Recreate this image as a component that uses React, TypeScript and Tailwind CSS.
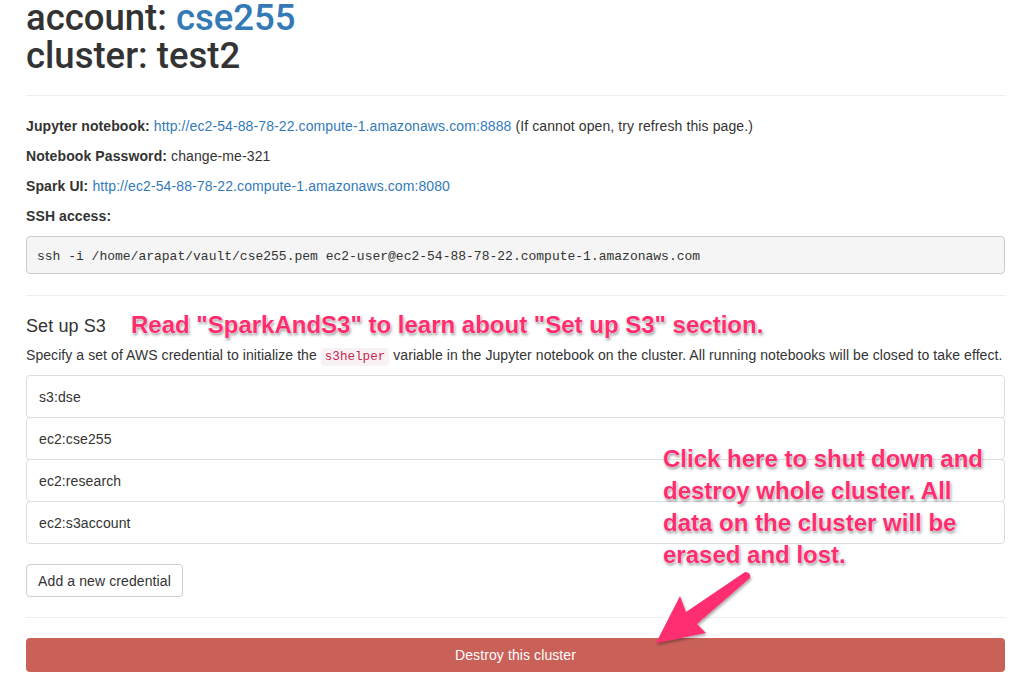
import React from "react";

const creds = ["s3:dse", "ec2:cse255", "ec2:research", "ec2:s3account"];

const annot =
  "font-bold text-[24px] tracking-normal text-[#ff2d6f] [font-family:'Liberation_Sans',Arial,sans-serif] [text-shadow:0_0_1px_#fff,0_0_2px_#fff,1px_2px_3px_rgba(0,0,0,0.45)]";

export default function App() {
  return (
    <div className="relative min-h-[685px] bg-white pl-[26px] pr-[18px] text-[14px] leading-[20px] tracking-[0.1px] text-[#333] [font-family:'Liberation_Sans',Arial,sans-serif]">
      <h1 className="-mt-px text-[36.5px] leading-[38px] font-medium tracking-normal text-[#333] [font-family:Roboto,'Liberation_Sans',sans-serif]">
        account: <a className="text-[#337ab7]">cse255</a>
        <br />
        cluster: test2
      </h1>
      <hr className="mt-5 mb-5 border-0 border-t border-[#eee]" />
      <p className="mb-[10px]">
        <b>Jupyter notebook:</b>{" "}
        <a className="text-[#337ab7]">http://ec2-54-88-78-22.compute-1.amazonaws.com:8888</a>{" "}
        (If cannot open, try refresh this page.)
      </p>
      <p className="mb-[10px]">
        <b>Notebook Password:</b> change-me-321
      </p>
      <p className="mb-[10px]">
        <b>Spark UI:</b>{" "}
        <a className="text-[#337ab7]">http://ec2-54-88-78-22.compute-1.amazonaws.com:8080</a>
      </p>
      <p className="mb-[10px]">
        <b>SSH access:</b>
      </p>
      <pre className="h-[38px] rounded border border-[#ccc] bg-[#f5f5f5] px-[10px] text-[13px] leading-[39px] tracking-normal text-[#333] [font-family:'Liberation_Mono','DejaVu_Sans_Mono',monospace]">
        ssh -i /home/arapat/vault/cse255.pem ec2-user@ec2-54-88-78-22.compute-1.amazonaws.com
      </pre>
      <hr className="mt-[21px] mb-5 border-0 border-t border-[#eee]" />
      <h4 className="text-[18px] leading-[20px] font-normal">Set up S3</h4>
      <p className="mt-[9px] mb-[8px] whitespace-nowrap text-[14px] leading-[20px] tracking-[0.07px]">
        Specify a set of AWS credential to initialize the{" "}
        <code className="rounded bg-[#f9f2f4] px-[4px] py-[2px] text-[12.6px] tracking-normal text-[#c7254e] [font-family:'Liberation_Mono','DejaVu_Sans_Mono',monospace]">
          s3helper
        </code>{" "}
        variable in the Jupyter notebook on the cluster. All running notebooks will be closed to take effect.
      </p>
      <div className="flex flex-col">
        {creds.map((c, i) => (
          <div
            key={c}
            className={
              "flex h-[43px] items-center rounded border border-[#ddd] px-[12px] text-[14px] " +
              (i > 0 ? "-mt-px" : "")
            }
          >
            {c}
          </div>
        ))}
      </div>
      <button className="mt-5 h-[33px] w-[157px] rounded border border-[#ccc] bg-white text-[14px] text-[#333]">
        Add a new credential
      </button>
      <hr className="mt-5 mb-5 border-0 border-t border-[#eee]" />
      <button className="h-[34px] w-full rounded bg-[#ca6159] text-[14px] text-white">
        Destroy this cluster
      </button>

      <div className={"absolute left-[131px] top-[313px] leading-[26px] whitespace-nowrap " + annot}>
        Read "SparkAndS3" to learn about "Set up S3" section.
      </div>
      <div className={"absolute left-[663px] top-[444px] leading-[32px] " + annot}>
        Click here to shut down and
        <br />
        destroy whole cluster. All
        <br />
        data on the cluster will be
        <br />
        erased and lost.
      </div>
      <svg
        className="absolute left-0 top-0 pointer-events-none"
        width="1023"
        height="685"
        viewBox="0 0 1023 685"
      >
        <defs>
          <filter id="sh" x="-20%" y="-20%" width="140%" height="140%">
            <feDropShadow dx="1" dy="2" stdDeviation="1.5" floodColor="#000" floodOpacity="0.35" />
          </filter>
        </defs>
        <path
          d="M656,644 L680,597 L686,613 L745,573 Q751,573 750,579 L697,625 L706,634 Z"
          fill="#ff2d6f"
          filter="url(#sh)"
        />
      </svg>
    </div>
  );
}
